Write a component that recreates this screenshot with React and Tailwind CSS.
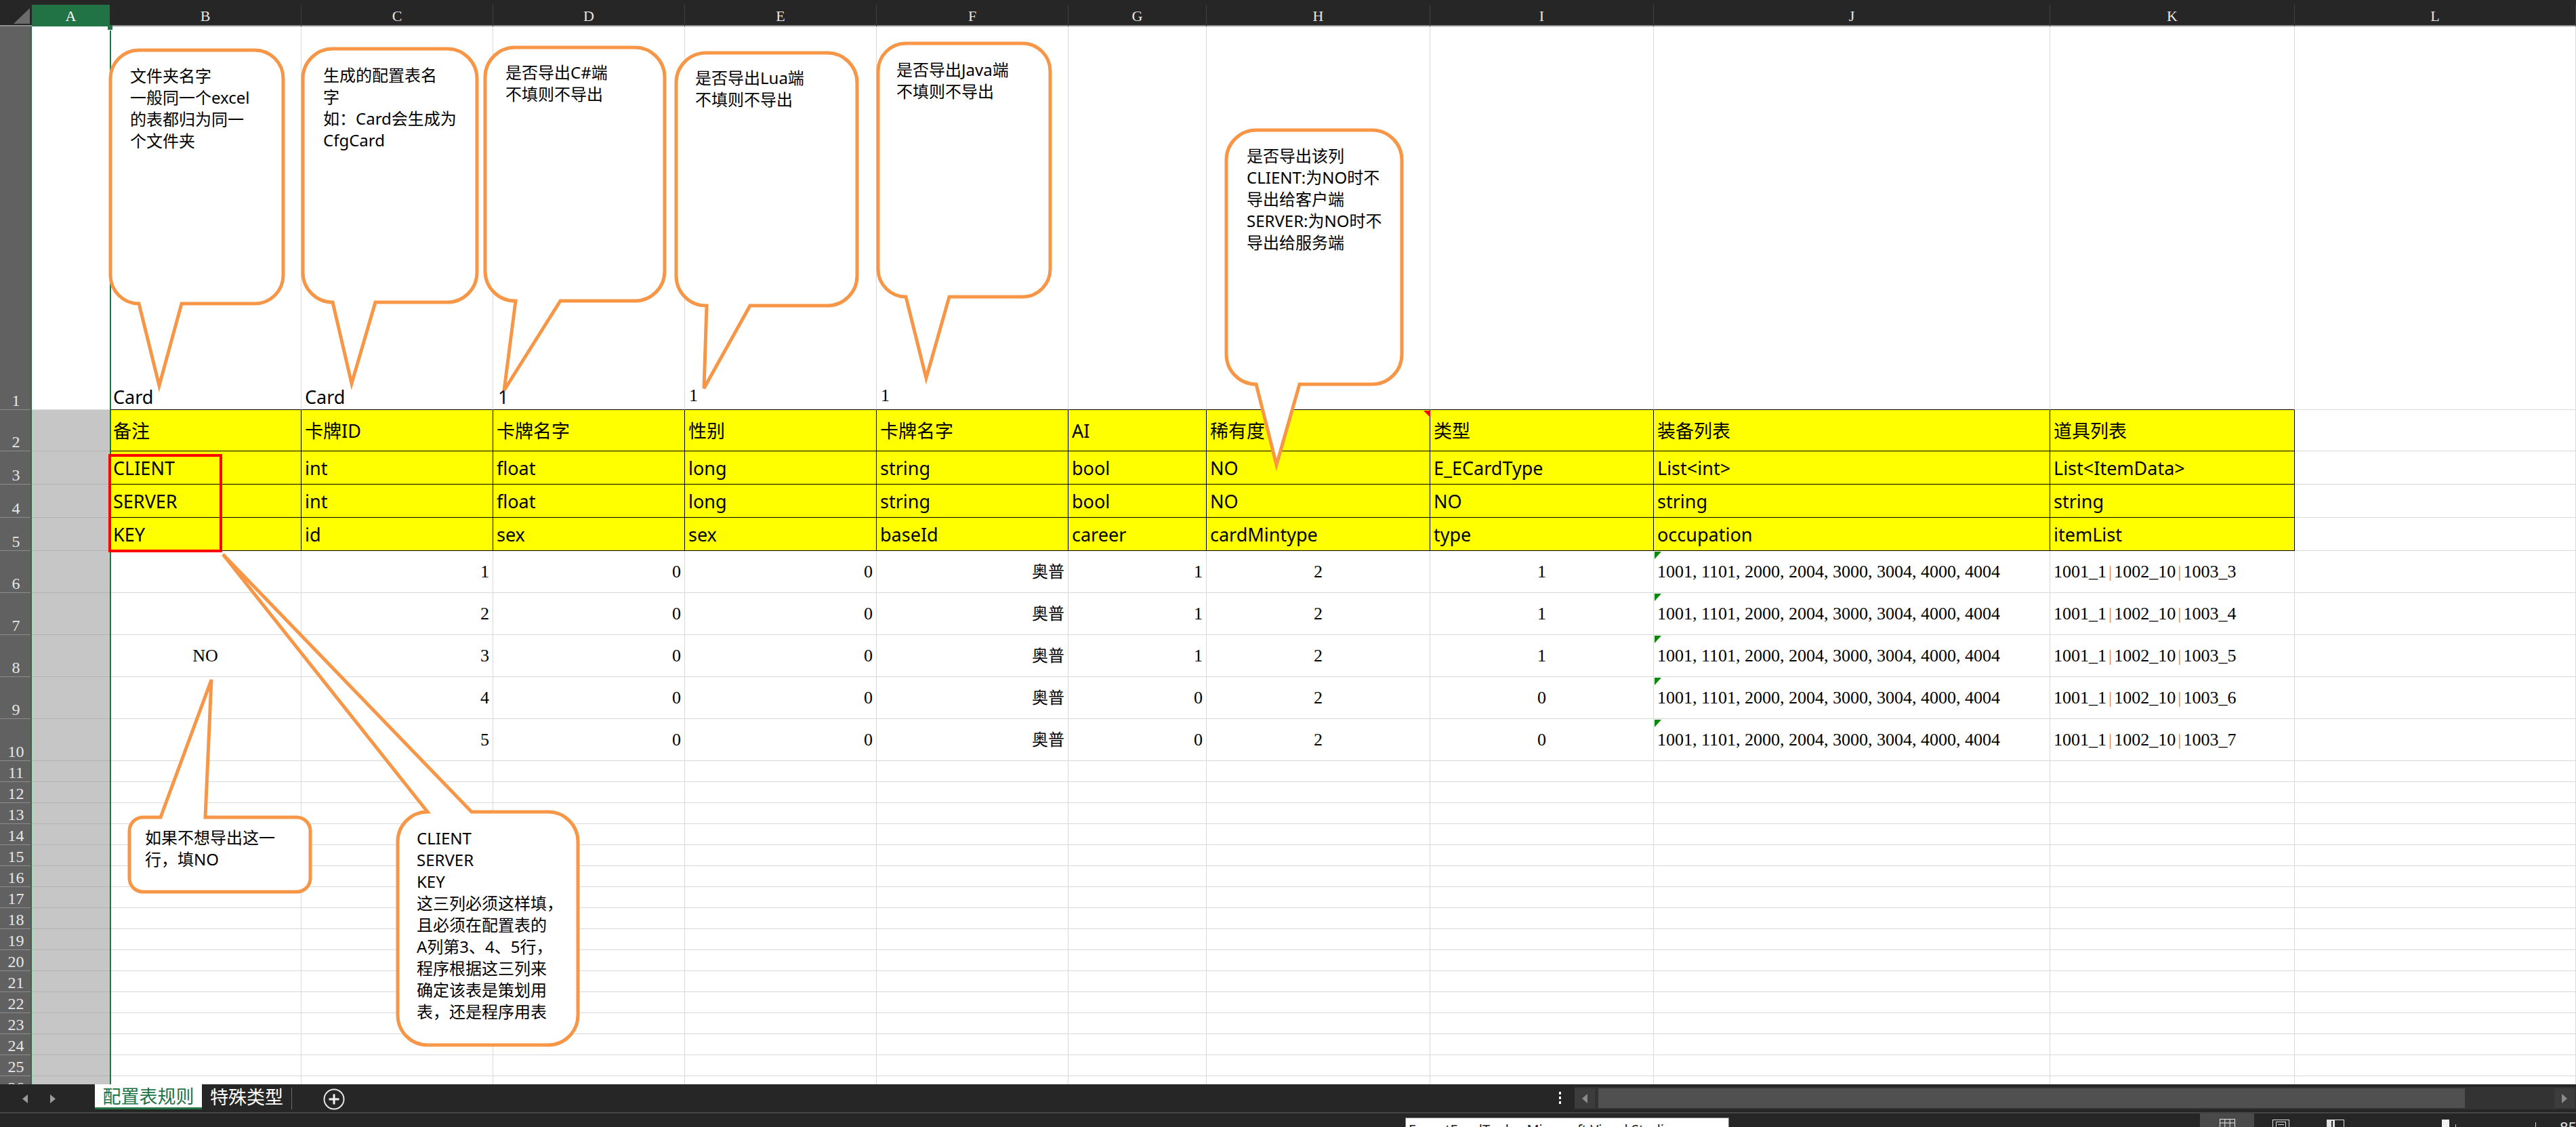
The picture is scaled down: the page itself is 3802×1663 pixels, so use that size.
import React from 'react';

const SANS = "font-['Noto_Sans','Noto_Sans_CJK_SC',sans-serif]";
const SERIF = "font-['Liberation_Serif','Noto_Sans_CJK_SC',serif]";
const GRID = 'grid grid-cols-[47px_115px_283px_283px_283px_283px_283px_204px_330px_330px_585px_361px_1fr]';

const LETTERS = ['A', 'B', 'C', 'D', 'E', 'F', 'G', 'H', 'I', 'J', 'K', 'L'];

const HEAD = [
  ['备注', '卡牌ID', '卡牌名字', '性别', '卡牌名字', 'AI', '稀有度', '类型', '装备列表', '道具列表'],
  ['CLIENT', 'int', 'float', 'long', 'string', 'bool', 'NO', 'E_ECardType', 'List<int>', 'List<ItemData>'],
  ['SERVER', 'int', 'float', 'long', 'string', 'bool', 'NO', 'NO', 'string', 'string'],
  ['KEY', 'id', 'sex', 'sex', 'baseId', 'career', 'cardMintype', 'type', 'occupation', 'itemList'],
];
const HEAD_H = ['h-[61px]', 'h-[49px]', 'h-[49px]', 'h-[49px]'];

const DATA = [
  { b: '', c: 1, g: 1, i: 1, k: 3 },
  { b: '', c: 2, g: 1, i: 1, k: 4 },
  { b: 'NO', c: 3, g: 1, i: 1, k: 5 },
  { b: '', c: 4, g: 0, i: 0, k: 6 },
  { b: '', c: 5, g: 0, i: 0, k: 7 },
];

// callout shapes, page pixel coordinates
const BUBBLES = [
  { l: 163, t: 74, r: 418, b: 448, rad: 42, side: 'bottom', x1: 205, x2: 268, tx: 235, ty: 569 },
  { l: 447, t: 72, r: 704, b: 446, rad: 44, side: 'bottom', x1: 491, x2: 554, tx: 519, ty: 566 },
  { l: 716, t: 70, r: 981, b: 444, rad: 44, side: 'bottom', x1: 761, x2: 827, tx: 744, ty: 576 },
  { l: 998, t: 78, r: 1265, b: 451, rad: 44, side: 'bottom', x1: 1043, x2: 1107, tx: 1039, ty: 573 },
  { l: 1296, t: 64, r: 1550, b: 438, rad: 41, side: 'bottom', x1: 1337, x2: 1401, tx: 1367, ty: 558 },
  { l: 1810, t: 192, r: 2069, b: 567, rad: 44, side: 'bottom', x1: 1854, x2: 1918, tx: 1884, ty: 686 },
  { l: 191, t: 1206, r: 458, b: 1316, rad: 20, side: 'top', x1: 237, x2: 303, tx: 312, ty: 1003 },
  { l: 587, t: 1198, r: 853, b: 1542, rad: 44, side: 'top', x1: 631, x2: 696, tx: 329, ty: 818 },
];

function bubblePath({ l, t, r, b, rad, side, x1, x2, tx, ty }) {
  const a = (x, y) => `A ${rad} ${rad} 0 0 1 ${x} ${y}`;
  if (side === 'bottom') {
    return [
      `M ${l + rad} ${t}`, `H ${r - rad}`, a(r, t + rad), `V ${b - rad}`, a(r - rad, b),
      `H ${x2}`, `L ${tx} ${ty}`, `L ${x1} ${b}`, `H ${l + rad}`, a(l, b - rad), `V ${t + rad}`, a(l + rad, t), 'Z',
    ].join(' ');
  }
  return [
    `M ${l + rad} ${t}`, `H ${x1}`, `L ${tx} ${ty}`, `L ${x2} ${t}`, `H ${r - rad}`, a(r, t + rad),
    `V ${b - rad}`, a(r - rad, b), `H ${l + rad}`, a(l, b - rad), `V ${t + rad}`, a(l + rad, t), 'Z',
  ].join(' ');
}

function RowLabel({ n }) {
  return (
    <div className={`flex items-end justify-center bg-[#616161] border-b border-[#8c8c8c] text-[24px] leading-[26px] text-[#e6e6e6] ${SERIF}`}>
      {n}
    </div>
  );
}

function ColA({ first }) {
  return first
    ? <div className="bg-white border-b border-[#d9d9d9]" />
    : <div className="bg-[#c6c6c6] border-b border-[#b3b3b3]" />;
}

function YCell({ children }) {
  return (
    <div className={`flex items-center px-[5px] whitespace-nowrap bg-[#ffff00] border-r border-b border-black text-[27px] leading-none text-black ${SANS}`}>
      {children}
    </div>
  );
}

function WCell({ children, align = 'l', serif = true }) {
  const aligns = { l: 'justify-start', r: 'justify-end', c: 'justify-center' };
  return (
    <div className={`flex items-center px-[5px] whitespace-nowrap bg-white border-r border-b border-[#d9d9d9] text-black leading-none ${aligns[align]} ${serif ? `text-[26px] ${SERIF}` : `text-[27px] ${SANS}`}`}>
      {children}
    </div>
  );
}

function Note({ className, lines }) {
  return (
    <div className={`absolute text-[24px] leading-[32px] text-black whitespace-nowrap ${SANS} ${className}`}>
      {lines.map((l, i) => <div key={i}>{l}</div>)}
    </div>
  );
}

function Bar() {
  return <span className="mx-[3px] text-[#cf8a62]">|</span>;
}

function Sheet() {
  const emptyRows = [];
  for (let n = 11; n <= 26; n++) emptyRows.push(n);

  return (
    <div className="relative h-[1600px] shrink-0 overflow-hidden bg-white">
      {/* column headers */}
      <div className={`${GRID} h-[39px] bg-[#262626] border-b-2 border-[#8f8f8f]`}>
        <div className="relative">
          <svg className="absolute left-0 top-0" width="47" height="37">
            <polygon points="44,12 44,35 20,35" fill="#6b6b6b" />
          </svg>
        </div>
        {LETTERS.map((l) => (
          <div
            key={l}
            className={l === 'A'
              ? `mt-[7px] flex items-center justify-center bg-[#217346] text-[22px] text-white ${SERIF}`
              : `mt-[7px] flex items-center justify-center border-r border-[#404040] text-[22px] text-[#e6e6e6] ${SERIF}`}
          >
            {l}
          </div>
        ))}
      </div>

      {/* row 1 */}
      <div className={`${GRID} h-[566px]`}>
        <RowLabel n={1} />
        <ColA first />
        <div className={`flex items-end pb-[2px] px-[5px] bg-white border-r border-b border-r-[#d9d9d9] border-b-black text-[27px] leading-[32px] ${SANS}`}>Card</div>
        <div className={`flex items-end pb-[2px] px-[5px] bg-white border-r border-b border-r-[#d9d9d9] border-b-black text-[27px] leading-[32px] ${SANS}`}>Card</div>
        <div className={`flex items-end pb-[2px] px-[7px] bg-white border-r border-b border-r-[#d9d9d9] border-b-black text-[27px] leading-[32px] ${SANS}`}>1</div>
        <div className={`flex items-end pb-[5px] px-[6px] bg-white border-r border-b border-r-[#d9d9d9] border-b-black text-[26px] leading-[30px] ${SERIF}`}>1</div>
        <div className={`flex items-end pb-[5px] px-[6px] bg-white border-r border-b border-r-[#d9d9d9] border-b-black text-[26px] leading-[30px] ${SERIF}`}>1</div>
        <div className="bg-white border-r border-b border-r-[#d9d9d9] border-b-black" />
        <div className="bg-white border-r border-b border-r-[#d9d9d9] border-b-black" />
        <div className="bg-white border-r border-b border-r-[#d9d9d9] border-b-black" />
        <div className="bg-white border-r border-b border-r-[#d9d9d9] border-b-black" />
        <div className="bg-white border-r border-b border-r-[#d9d9d9] border-b-black" />
        <div className="bg-white border-r border-b border-[#d9d9d9]" />
      </div>

      {/* rows 2-5, yellow block */}
      {HEAD.map((row, ri) => (
        <div key={ri} className={`${GRID} ${HEAD_H[ri]}`}>
          <RowLabel n={ri + 2} />
          <ColA />
          {row.map((t, ci) => <YCell key={ci}>{t}</YCell>)}
          <div className="bg-white border-r border-b border-[#d9d9d9]" />
        </div>
      ))}

      {/* rows 6-10, data */}
      {DATA.map((d, ri) => (
        <div key={ri} className={`${GRID} h-[62px]`}>
          <RowLabel n={ri + 6} />
          <ColA />
          <WCell align="c">{d.b}</WCell>
          <WCell align="r">{d.c}</WCell>
          <WCell align="r">0</WCell>
          <WCell align="r">0</WCell>
          <WCell align="r"><span className="text-[24px]">奥普</span></WCell>
          <WCell align="r">{d.g}</WCell>
          <WCell align="c">2</WCell>
          <WCell align="c">{d.i}</WCell>
          <WCell>1001, 1101, 2000, 2004, 3000, 3004, 4000, 4004</WCell>
          <WCell>
            <span>1001_1</span><Bar /><span>1002_10</span><Bar /><span>1003_{d.k}</span>
          </WCell>
          <WCell />
        </div>
      ))}

      {/* rows 11-26 */}
      {emptyRows.map((n) => (
        <div key={n} className={`${GRID} h-[31px]`}>
          <RowLabel n={n} />
          <ColA />
          {LETTERS.slice(1).map((l) => <div key={l} className="bg-white border-r border-b border-[#d9d9d9]" />)}
        </div>
      ))}

      {/* selection of column A */}
      <div className="absolute left-[45px] top-[39px] w-[2px] h-[1561px] bg-[#217346]" />
      <div className="absolute left-[162px] top-[45px] w-[2px] h-[1555px] bg-[#217346]" />
      <div className="absolute left-[159px] top-[37px] w-[7px] h-[7px] bg-[#217346]" />

      {/* drawing layer: callouts, red frame, cell markers */}
      <svg className="absolute left-0 top-0 pointer-events-none" width="3802" height="1600" viewBox="0 0 3802 1600">
        {BUBBLES.map((b, i) => (
          <path key={i} d={bubblePath(b)} fill="#ffffff" stroke="#f79646" strokeWidth="5" strokeLinejoin="miter" />
        ))}
        <rect x="162" y="672" width="164" height="141" fill="none" stroke="#ff0000" strokeWidth="4" />
        <polygon points="2101,606 2111,606 2111,616" fill="#ff0000" />
        {[0, 1, 2, 3, 4].map((i) => (
          <polygon key={i} points={`2442,${814 + i * 62} 2452,${814 + i * 62} 2442,${825 + i * 62}`} fill="#0a8a0a" />
        ))}
      </svg>

      <Note className="left-[192px] top-[96px]" lines={['文件夹名字', '一般同一个excel', '的表都归为同一', '个文件夹']} />
      <Note className="left-[477px] top-[95px]" lines={['生成的配置表名', '字', '如：Card会生成为', 'CfgCard']} />
      <Note className="left-[746px] top-[91px]" lines={['是否导出C#端', '不填则不导出']} />
      <Note className="left-[1026px] top-[99px]" lines={['是否导出Lua端', '不填则不导出']} />
      <Note className="left-[1323px] top-[87px]" lines={['是否导出Java端', '不填则不导出']} />
      <Note className="left-[1840px] top-[214px]" lines={['是否导出该列', 'CLIENT:为NO时不', '导出给客户端', 'SERVER:为NO时不', '导出给服务端']} />
      <Note className="left-[214px] top-[1220px]" lines={['如果不想导出这一', '行，填NO']} />
      <Note
        className="left-[615px] top-[1221px]"
        lines={['CLIENT', 'SERVER', 'KEY', '这三列必须这样填，', '且必须在配置表的', 'A列第3、4、5行，', '程序根据这三列来', '确定该表是策划用', '表，还是程序用表']}
      />
    </div>
  );
}

function TabBar() {
  return (
    <div className={`flex items-start h-[41px] shrink-0 bg-[#262626] ${SANS}`}>
      <div className="w-[140px] h-full flex items-start pl-[33px] pt-[15px] gap-[33px]">
        <svg width="8" height="13"><polygon points="8,0 8,13 0,6.5" fill="#9b9b9b" /></svg>
        <svg width="8" height="13"><polygon points="0,0 8,6.5 0,13" fill="#9b9b9b" /></svg>
      </div>
      <div className="w-[158px] h-[37px] bg-white border-b-[3px] border-[#217346] flex items-center justify-center text-[27px] leading-none text-[#217346]">
        配置表规则
      </div>
      <div className="ml-[12px] h-[37px] flex items-center text-[27px] leading-none text-white">特殊类型</div>
      <div className="ml-[12px] mt-[5px] w-px h-[32px] bg-[#6a6a6a]" />
      <svg className="ml-[46px] mt-[6px]" width="32" height="32" viewBox="0 0 32 32">
        <circle cx="16" cy="16" r="14.5" fill="none" stroke="#e6e6e6" strokeWidth="2" />
        <rect x="14.5" y="8.5" width="3" height="15" fill="#f2f2f2" />
        <rect x="8.5" y="14.5" width="15" height="3" fill="#f2f2f2" />
      </svg>
      <div className="flex-1" />
      <div className="mt-[11px] flex flex-col gap-[3px]">
        <div className="w-[3px] h-[4px] bg-white" />
        <div className="w-[3px] h-[4px] bg-white" />
        <div className="w-[3px] h-[4px] bg-white" />
      </div>
      <div className="ml-[20px] mt-[4px] w-[1478px] h-[33px] bg-[#333333] flex items-center">
        <div className="w-[30px] h-[29px] bg-[#3c3c3c] flex items-center justify-center">
          <svg width="8" height="14"><polygon points="8,0 8,14 0,7" fill="#8a8a8a" /></svg>
        </div>
        <div className="ml-[5px] w-[1279px] h-[29px] bg-[#505050]" />
        <div className="flex-1" />
        <div className="mr-[2px] w-[30px] h-[29px] bg-[#3c3c3c] flex items-center justify-center">
          <svg width="8" height="14"><polygon points="0,0 8,7 0,14" fill="#8a8a8a" /></svg>
        </div>
      </div>
    </div>
  );
}

function StatusBar() {
  return (
    <div className={`relative flex items-start h-[20px] shrink-0 overflow-hidden bg-[#262626] ${SANS}`}>
      <div className="absolute left-[2074px] top-[6px] w-[478px] h-[40px] bg-white border border-[#767676] pl-[4px] pt-[5px] text-[20px] leading-[24px] text-[#1a1a1a] whitespace-nowrap">
        ExportExcelTools - Microsoft Visual Studio
      </div>
      <div className="w-[3247px] shrink-0" />
      <div className="w-[80px] h-[20px] shrink-0 bg-[#4a4a4a] flex justify-center pt-[8px]">
        <svg width="23" height="14" viewBox="0 0 23 14">
          <rect x="0.5" y="0.5" width="22" height="16" fill="none" stroke="#e8e8e8" />
          <line x1="7.8" y1="0" x2="7.8" y2="14" stroke="#e8e8e8" />
          <line x1="15.2" y1="0" x2="15.2" y2="14" stroke="#e8e8e8" />
          <line x1="0" y1="6" x2="23" y2="6" stroke="#e8e8e8" />
        </svg>
      </div>
      <svg className="ml-[27px] mt-[9px] shrink-0" width="25" height="14" viewBox="0 0 25 14">
        <rect x="0.5" y="0.5" width="24" height="16" fill="none" stroke="#e0e0e0" />
        <rect x="5.5" y="3.5" width="14" height="12" fill="none" stroke="#e0e0e0" />
        <line x1="8" y1="7.5" x2="17" y2="7.5" stroke="#e0e0e0" />
      </svg>
      <svg className="ml-[55px] mt-[9px] shrink-0" width="26" height="14" viewBox="0 0 26 14">
        <rect x="0" y="0" width="11" height="14" fill="#e0e0e0" />
        <rect x="7" y="2" width="2" height="12" fill="#262626" />
        <rect x="11.5" y="0.5" width="14" height="16" fill="none" stroke="#e0e0e0" />
      </svg>
      <div className="ml-[144px] mt-[9px] w-[11px] h-[14px] shrink-0 bg-[#f2f2f2]" />
      <div className="ml-[9px] mt-[16px] w-px h-[6px] shrink-0 bg-[#d0d0d0]" />
      <div className="ml-[117px] mt-[13px] w-px h-[8px] shrink-0 bg-[#d0d0d0]" />
      <div className="ml-[35px] mt-[7px] shrink-0 text-[22px] leading-[26px] text-[#e6e6e6] whitespace-nowrap">85%</div>
    </div>
  );
}

export default function App() {
  return (
    <div className="w-[3802px] h-[1663px] overflow-hidden flex flex-col bg-[#262626]">
      <Sheet />
      <TabBar />
      <div className="h-[2px] shrink-0 bg-[#444444]" />
      <StatusBar />
    </div>
  );
}
